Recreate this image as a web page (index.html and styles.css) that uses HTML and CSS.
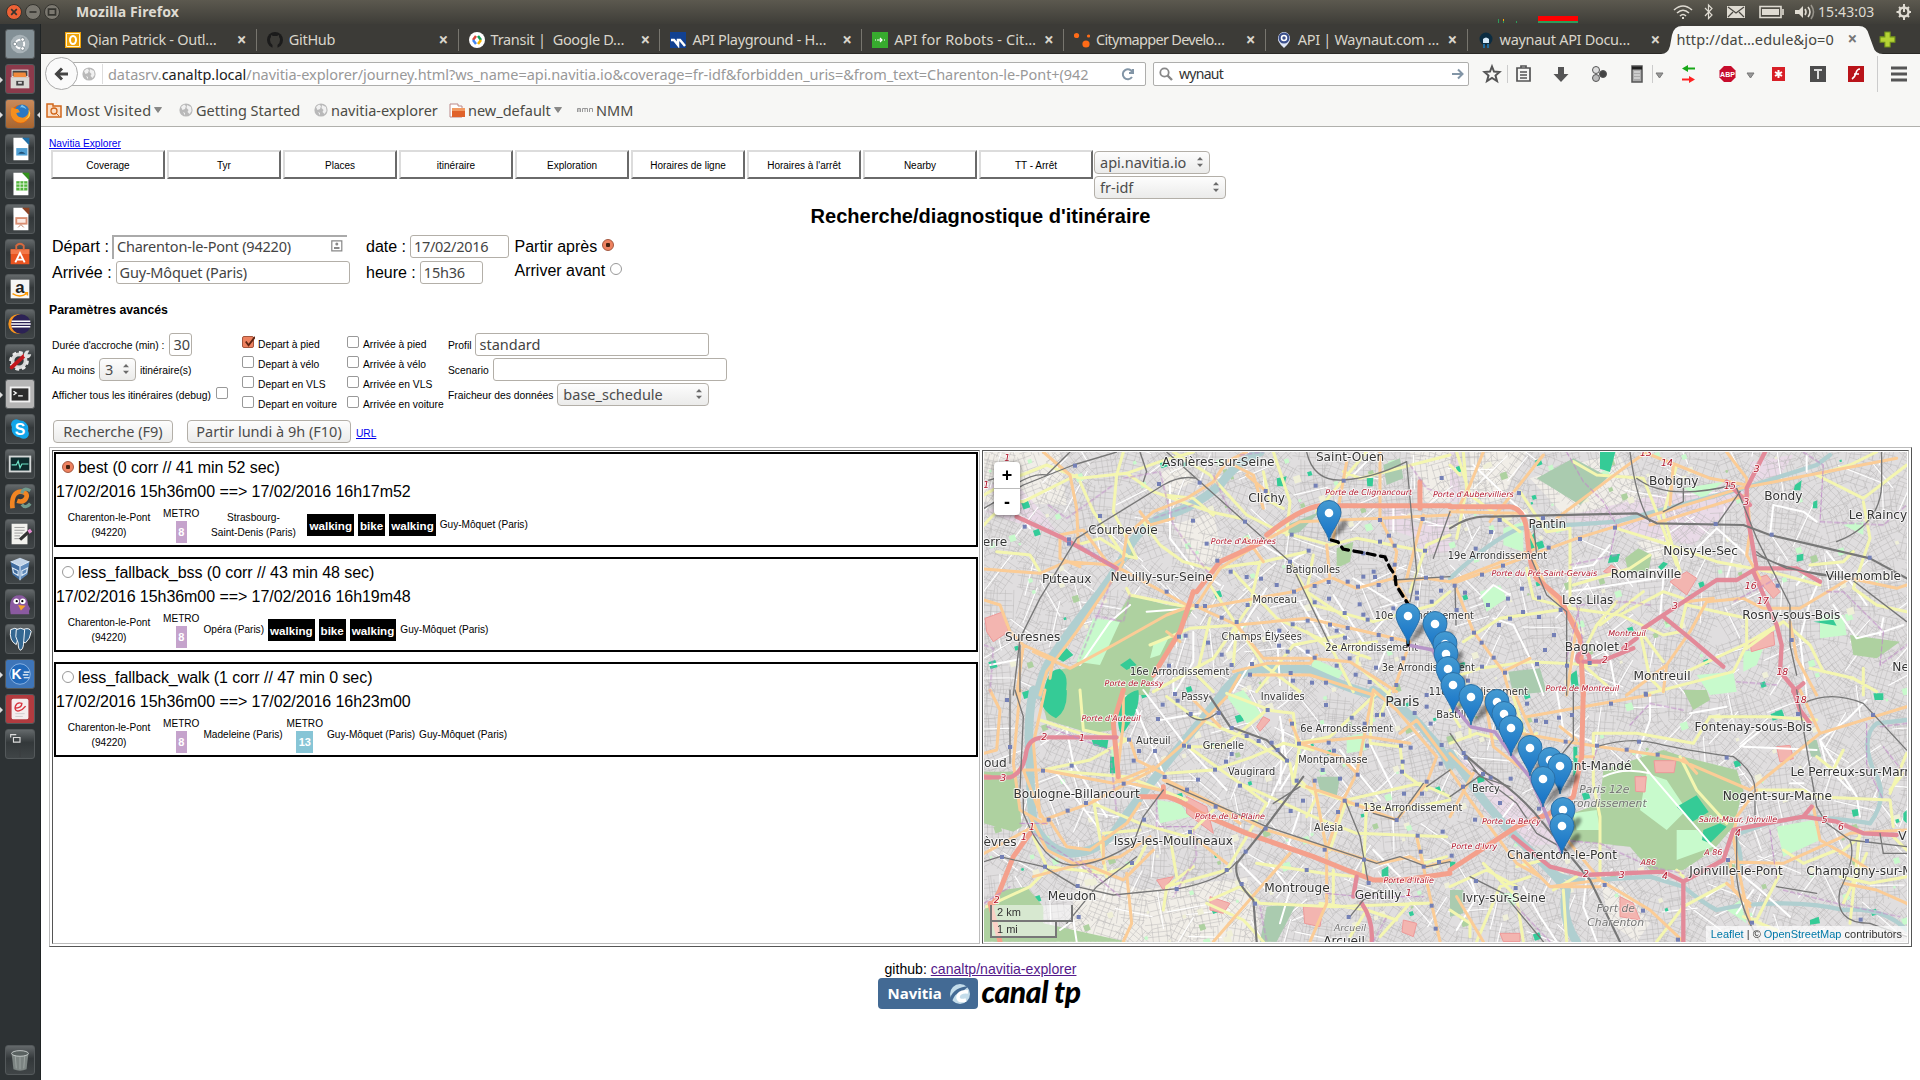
FILE: index.html
```html
<!DOCTYPE html>
<html lang="fr">
<head>
<meta charset="utf-8">
<title>Navitia Explorer</title>
<link rel="stylesheet" href="styles.css">
</head>
<body>
<svg width="0" height="0" class="defs">
  <defs>
    <linearGradient id="pinFill" x1="0" y1="0" x2="0" y2="1"><stop offset="0" stop-color="#459bd2"/><stop offset="1" stop-color="#126fc6"/></linearGradient>
    <symbol id="globe" viewBox="0 0 14 14"><circle cx="7" cy="7" r="6.6" fill="#b9b9b9"/><path d="M2 4 5 1.5 7 3 6 6 3.5 7zM8 2l4 2 .5 4-2 3-2-2 1-2-2-2zM4 9l2 1 0 2.500z" fill="#f1f1f1"/></symbol>
    <symbol id="spin" viewBox="0 0 8 12"><path d="M4 1 7 4.300H1zM4 11 7 7.700H1z" fill="#6b6b6b"/></symbol>
    <symbol id="caret" viewBox="0 0 8 6"><path d="M.5.500h7L4 5.500z" fill="#8a8a88" stroke="#666" stroke-width=".6"/></symbol>
    <symbol id="pin" viewBox="0 0 42 42" overflow="visible"><path d="M13 41 21 26Q28 17 31 22 32 29 13 41z" fill="#000" opacity=".4" class="shadow"/><path d="M12.500 41C11.500 33 .5 21 .5 12.500a12 12 0 0 1 24 0C24.500 21 13.500 33 12.500 41z" fill="url(#pinFill)" stroke="#2a6fa5" stroke-width="1"/><circle cx="12.500" cy="13" r="4.300" fill="#fff"/></symbol>
  </defs>
</svg>

<header class="panel">
  <span class="win close"><svg viewBox="0 0 10 10"><path d="M3 3l4 4M7 3l-4 4"/></svg></span>
  <span class="win"><svg viewBox="0 0 10 10"><path d="M2.500 5h5"/></svg></span>
  <span class="win"><svg viewBox="0 0 10 10"><path d="M2.500 3h5v4h-5z"/></svg></span>
  <b class="apptitle">Mozilla Firefox</b>
  <svg class="load" viewBox="0 0 84 8"><path d="M0 4h1v4H0zM5 4h1v4H5zM18 6h1v2h-1zM40 5h40v3H40z" fill="#2e9b5b"/><path d="M40 1h40v5H40z" fill="#f00"/><path d="M5 4h1v2H5z" fill="#fa0"/></svg>
  <svg class="tray" viewBox="0 0 240 24" fill="none" stroke="#dfdbd2" stroke-width="1.600">
    <path d="M3 10q9-8 18 0M6 13q6-5.500 12 0M9 16q3-3 6 0"/><path d="M12 17v2" stroke-width="2"/>
    <path d="M34 8l7 7-3.500 3.500V5L41 8.500 34 16" stroke-width="1.200"/>
    <path d="M56 6h18v12H56z" fill="#dfdbd2" stroke="none"/><path d="M57 7l8 6 8-6M57 17l5-5M73 17l-5-5" stroke="#4a4842" stroke-width="1.200"/>
    <path d="M89 6.500h21v11H89zM112 9v6"/><path d="M91 9h17v6H91z" fill="#dfdbd2" stroke="none"/>
    <path d="M124 10h4l4-4v12l-4-4h-4z" fill="#dfdbd2" stroke="none"/><path d="M134 9q2 3 0 6M137 7q4 5 0 10"/><path d="M140 5q5 7 0 14" opacity=".5"/>
    <circle cx="233" cy="12" r="4.500" stroke-width="2.400"/><path d="M233 4v8M225.500 12h3M237.500 12h3M228 17l1.500-1.500M238 17l-1.500-1.500M228 7l1.500 1.500M238 7l-1.500 1.500M233 20v-3" stroke-width="2"/>
  </svg>
  <span class="clock">15:43:03</span>
</header>

<div class="desktop">
<nav class="launcher">
  <i class="tile dash"><svg viewBox="0 0 30 30"><circle cx="15" cy="15" r="10" fill="#b9c2c6" opacity=".7"/><circle cx="15" cy="15" r="4.500" fill="none" stroke="#fff" stroke-width="2"/><g fill="#fff" stroke="#7d898f"><circle cx="9.500" cy="15" r="2"/><circle cx="17.800" cy="10.200" r="2"/><circle cx="17.800" cy="19.800" r="2"/></g></svg></i>
  <i class="tile wine run"><svg viewBox="0 0 30 30"><path d="M6 5h18v8H6z" fill="#f3f3f3"/><path d="M7 6h16v6H7z" fill="#444"/><path d="M8 8h13l1 5H8z" fill="#f08a3c"/><path d="M5 13h20v12H5z" fill="#d9d9d4"/><path d="M11 17h8v5h-8z" fill="#444"/><path d="M13 18h4v2h-4z" fill="#ddd"/></svg></i>
  <i class="tile fox run active"><svg viewBox="0 0 30 30"><circle cx="15.500" cy="15" r="10" fill="#e66000"/><circle cx="17" cy="12.500" r="7.800" fill="#2a78c2"/><path d="M17 5q4 2 5 5-4-3-7-2z" fill="#7cc5f0"/><path d="M6 8q-3 9 3 14 7 5 13 0 5-5 3-12-1 8-7 9-6 0-7-5l4-1-2-3-4-1z" fill="#f58f1e"/><path d="M24 10q2 8-4 11 6-1 6-7z" fill="#ffd24a"/></svg></i>
  <i class="tile"><svg viewBox="0 0 30 30"><path d="M8 3h10l6 7v17H8z" fill="#fff"/><path d="M17 3h8v8z" fill="#1f6fa8"/><path d="M11 14h12v8H11z" fill="#4f9fd3"/><path d="M13 20q3-4 8 0z" fill="#1f4f75"/></svg></i>
  <i class="tile"><svg viewBox="0 0 30 30"><path d="M8 3h10l6 7v17H8z" fill="#fff"/><path d="M17 3h8v8z" fill="#33921c"/><path d="M11 12h12v10H11z" fill="#51b53b"/><path d="M11 15h12M11 18.500h12M15 12v10M19 12v10" stroke="#e5f5df"/></svg></i>
  <i class="tile"><svg viewBox="0 0 30 30"><path d="M8 3h10l6 7v17H8z" fill="#fff"/><path d="M17 3h8v8z" fill="#8d4324"/><path d="M10 13h13v8H10z" fill="#d98e72"/><path d="M12 15h9v4h-9z" fill="#fbeae3"/><path d="M13 24l3-3 3 3" stroke="#b87358" fill="none"/></svg></i>
  <i class="tile"><svg viewBox="0 0 30 30"><path d="M5 10h20v5H5zM5 15h20v11H5z" fill="#e95420"/><path d="M5 10h20v5H5z" fill="#f37849"/><path d="M11 11V6q4-4 8 0v5" fill="none" stroke="#d6693e" stroke-width="2"/><path d="M10 24l5-10 5 10M11.500 21h7" stroke="#fff" stroke-width="2" fill="none"/></svg></i>
  <i class="tile"><svg viewBox="0 0 30 30"><path d="M5 5h20v20H5z" fill="#f6f6f6"/><text x="15" y="19" text-anchor="middle" class="amz">a</text><path d="M7 20q8 5 15 0M20 19h3v3" stroke="#f90" stroke-width="1.500" fill="none"/></svg></i>
  <i class="tile"><svg viewBox="0 0 30 30"><circle cx="13" cy="15" r="10.500" fill="#f7941e"/><circle cx="16" cy="15" r="10.500" fill="#2c2255"/><path d="M6 12h20M5.500 15h21M6 18h20" stroke="#fff" stroke-width="1.500"/></svg></i>
  <i class="tile"><svg viewBox="0 0 30 30"><circle cx="14" cy="17" r="7" fill="none" stroke="#d7d7d7" stroke-width="4"/><circle cx="14" cy="17" r="9" fill="none" stroke="#e8e8e8" stroke-width="3" stroke-dasharray="4 3"/><path d="M6 24 20 11" stroke="#c4161c" stroke-width="4" stroke-linecap="round"/><path d="M19 12q0-7 6-6l-2 4 4 0q-1 5-6 4z" fill="#e0e0e0"/></svg></i>
  <i class="tile light run"><svg viewBox="0 0 30 30"><path d="M4 7h22v17H4z" fill="#f1f1f1"/><path d="M6 9h18v13H6z" fill="#2c2c2c"/><path d="M8 12l3 2-3 2M13 17h5" stroke="#fff" stroke-width="1.400" fill="none"/></svg></i>
  <i class="tile"><svg viewBox="0 0 30 30"><circle cx="15" cy="15" r="9" fill="#12a5e9"/><circle cx="11" cy="10" r="5.500" fill="#12a5e9"/><circle cx="19" cy="20" r="5.500" fill="#12a5e9"/><text x="15" y="21" text-anchor="middle" class="sky">S</text></svg></i>
  <i class="tile"><svg viewBox="0 0 30 30"><path d="M3 6h24v18H3z" fill="#d5d8d8"/><path d="M5 8h20v14H5z" fill="#0d2a2c"/><path d="M6 16h5l2-4 2 7 2-4h7" stroke="#6fe3c8" stroke-width="1.300" fill="none"/></svg></i>
  <i class="tile"><svg viewBox="0 0 30 30"><path d="M7 25q-2-17 9-18 9 2 5 8-3 4-9 2" stroke="#f28522" stroke-width="5" fill="none"/><path d="M26 6q-8-4-9 3M17 21q4 5 9-1" stroke="#719b8d" stroke-width="3.500" fill="none"/></svg></i>
  <i class="tile"><svg viewBox="0 0 30 30"><path d="M6 4h17v22H6z" fill="#f2f2ee"/><path d="M9 8h11M9 11h11M9 14h9M9 17h6M9 20h5" stroke="#999"/><path d="M15 21 25 12" stroke="#333" stroke-width="3.500"/><path d="M24 13l3-2" stroke="#e48bd0" stroke-width="4"/></svg></i>
  <i class="tile"><svg viewBox="0 0 30 30"><path d="M15 3 25 7 15 12 5 7z" fill="#c4d5e8"/><path d="M5 7l10 5v15L7 21z" fill="#3f6ca0"/><path d="M25 7l-10 5v15l8-6z" fill="#5f8abb"/><path d="M5 7l10 5 10-5M15 12v15M7 14l6 3v5l-5-3zM23 14l-6 3v5l5-3z" stroke="#dce9f6" fill="none" stroke-width="1.200"/></svg></i>
  <i class="tile"><svg viewBox="0 0 30 30"><path d="M5 26Q2 9 11 6q9-2 12 6 0 5 3 8-2 2-1 6z" fill="#8a5aa0"/><circle cx="11" cy="12" r="3" fill="#fff"/><circle cx="18" cy="12" r="3" fill="#fff"/><circle cx="11.500" cy="12" r="1.200"/><circle cx="17.500" cy="12" r="1.200"/><path d="M13 16l8 1-5 5z" fill="#f5a52c"/></svg></i>
  <i class="tile"><svg viewBox="0 0 30 30" stroke="#fff" fill="#336791"><path d="M5 5q5-3 8 0 2 7-2 16-8-4-6-16z"/><path d="M18 5q7-3 9 2-1 8-6 12l-4-1z"/><path d="M11 5q5-3 9 0l-1 12q0 8-3 10-3 0-3-8-4-6-2-14z"/></svg></i>
  <i class="tile blue run"><svg viewBox="0 0 30 30"><circle cx="15" cy="15" r="11" fill="#2269ba" stroke="#8bb4e4"/><text x="6" y="20" class="kk">K</text><path d="M19 13h6M18 16h6M19 19h6" stroke="#fff" stroke-width="1.300"/></svg></i>
  <i class="tile crim run"><svg viewBox="0 0 30 30"><rect x="6" y="4" width="18" height="22" rx="2" fill="#f4eeee"/><path d="M9 14q8 0 8-5-5-2-7 3-1 6 4 5 4-1 7-5" stroke="#d8333d" stroke-width="1.500" fill="none"/><path d="M10 20h10M10 23h8" stroke="#ccc"/></svg></i>
  <i class="tile ws"><svg viewBox="0 0 30 30"><path d="M5 8V5h6M8 8h7v5H8z" stroke="#ddd" fill="none" stroke-width="1.200"/><path d="M15 16v13" stroke="#3a3d3f"/></svg></i>
  <i class="tile trash"><svg viewBox="0 0 30 30"><path d="M6 8l2 17q7 3 14 0l2-17z" fill="#7c8482"/><path d="M10 11l1 13M15 12v13M20 11l-1 13" stroke="#9da5a3"/><ellipse cx="15" cy="8" rx="9" ry="3" fill="#596160" stroke="#c9cfce"/></svg></i>
</nav>

<div class="browser">
  <div class="tabs">
    <div class="tab"><svg viewBox="0 0 16 16"><rect width="16" height="16" fill="#f0a30a"/><path d="M1.500 1.500h13v13h-13z" fill="none" stroke="#fff3cf" /><ellipse cx="8" cy="8" rx="3" ry="4" fill="none" stroke="#fff" stroke-width="2"/></svg><span>Qian Patrick - Outl…</span><b>×</b></div>
    <div class="tab"><svg viewBox="0 0 16 16"><circle cx="8" cy="8" r="8" fill="#1b1b1b"/><path d="M5.500 16v-3Q3 11 3 8q0-2 1-3l0-2 2 1h4l2-1v2q1 1 1 3 0 3-2.500 5v3z" fill="#3c3b37"/></svg><span>GitHub</span><b>×</b></div>
    <div class="tab"><svg viewBox="0 0 16 16"><circle cx="8" cy="8" r="8" fill="#fff"/><path d="M7 4 4 8" stroke="#db4437" stroke-width="2.500"/><path d="M4 8l3 4" stroke="#4285f4" stroke-width="2.500"/><path d="M9 4l3 4" stroke="#0f9d58" stroke-width="2.500"/><path d="M12 8l-3 4" stroke="#f4b400" stroke-width="2.500"/></svg><span>Transit&nbsp;| &nbsp;Google D…</span><b>×</b></div>
    <div class="tab"><svg viewBox="0 0 16 16"><path d="M0 0h16v16H0z" fill="#124191"/><path d="M1 8h3l4 5V8h2l5 6" stroke="#fff" stroke-width="2.500" fill="none"/></svg><span>API Playground - H…</span><b>×</b></div>
    <div class="tab loose"><svg viewBox="0 0 16 16"><path d="M0 0h16v16H0z" fill="#37ab2e"/><path d="M3 8h1M5 8h5M8 6l2 2-2 2M12 8h1" stroke="#fff" stroke-width="1.200" fill="none"/></svg><span>API for Robots - Cit…</span><b>×</b></div>
    <div class="tab tight"><svg viewBox="0 0 16 16" fill="#ff6b17"><circle cx="2.500" cy="3.500" r="2.600"/><circle cx="12" cy="12" r="3.600"/><circle cx="14.500" cy="4" r="1.600"/></svg><span>Citymapper Develo…</span><b>×</b></div>
    <div class="tab"><svg viewBox="0 0 16 16"><path d="M8 16Q1 10 2 5q2-5 6-5t6 5q1 5-6 11z" fill="#dfe6f5"/><circle cx="8" cy="6" r="5.500" fill="#3b4f8c"/><circle cx="8" cy="6" r="2.500" fill="none" stroke="#fff" stroke-width="1.500"/></svg><span>API | Waynaut.com …</span><b>×</b></div>
    <div class="tab last"><svg viewBox="0 0 16 16"><circle cx="8" cy="7" r="6.500" fill="#0b2c41"/><path d="M5 7q3-3 6 0v4H5z" fill="#d3e8f7"/><path d="M5 12h2v4H5zM9 12h2v4H9z" fill="#1d6ca0"/></svg><span>waynaut API Docu…</span><b>×</b></div>
    <div class="current"><svg class="tabshape" viewBox="0 0 222 30" preserveAspectRatio="none"><path d="M0 30Q7 30 9 22L11 11Q13 2 21 2H198Q206 2 208 11L212 22Q214 30 222 30z" fill="#f7f7f5"/></svg><span>http://dat…edule&amp;jo=0</span><b>×</b></div>
    <svg class="plus" viewBox="0 0 16 16"><path d="M5.500 1h5v4.500H15v5h-4.500V15h-5v-4.500H1v-5h4.500z" fill="#b5d334" stroke="#6f8f1c"/></svg>
  </div>
  <div class="navbar">
    <span class="back"><svg viewBox="0 0 16 16"><path d="M14 8H3M8 2.500 2.500 8 8 13.500" fill="none" stroke="#444" stroke-width="3"/></svg></span>
    <div class="url"><svg class="gl"><use href="#globe"/></svg><span class="addr">datasrv.<em>canaltp.local</em>/navitia-explorer/journey.html?ws_name=api.navitia.io&amp;coverage=fr-idf&amp;forbidden_uris=&amp;from_text=Charenton-le-Pont+(942</span><svg class="reload" viewBox="0 0 14 14"><path d="M12 2v4H8M11.500 5.500A5 5 0 1 0 11 10" fill="none" stroke="#8295a6" stroke-width="2"/></svg></div>
    <div class="search"><svg viewBox="0 0 14 14"><circle cx="5.500" cy="5.500" r="4.200" fill="none" stroke="#888" stroke-width="1.800"/><path d="M8.500 8.500 13 13" stroke="#888" stroke-width="2.400"/></svg><span>wynaut</span><svg viewBox="0 0 14 14"><path d="M1 7h10M7 2.500 11.500 7 7 11.500" fill="none" stroke="#8295a6" stroke-width="2"/></svg></div>
    <svg class="tools" viewBox="0 0 434 40" fill="none" stroke="#555" stroke-width="2">
      <path d="M16 12.500l2 5 5.500.5-4 3.500 1.500 5.500-5-3-5 3 1.500-5.500-4-3.500 5.500-.5z"/>
      <path d="M31.500 11v18M176.500 11v18M401.500 2v36" stroke="#ccc" stroke-width="1"/>
      <path d="M41 14h13v13H41zM45 12h5v2h-5zM44 18h7M44 21h7M44 24h7" stroke-width="1.700"/>
      <path d="M82 13h6v7h4.500L85 28l-7.500-8H82z" fill="#555" stroke="none"/>
      <g stroke="#555" stroke-width="1"><circle cx="120" cy="16" r="3.500" fill="#ddd"/><circle cx="127" cy="20" r="3.500" fill="#444"/><circle cx="120" cy="24" r="3.500" fill="#bbb"/></g>
      <path d="M156 12h10v16h-10z" fill="#aaa" stroke-width="1.500"/><path d="M158 18h6M158 21h6M158 24h6" stroke="#eee" stroke-width="1"/><path d="M156 14h10" stroke="#222" stroke-width="3"/>
      <path d="M180 19h7l-3.500 5zM271 19h7l-3.500 5z" fill="#999" stroke="#777" stroke-width="1"/>
      <path d="M219 14.500h-8" stroke="#18a818"/><path d="M206 14.500l6-3.500v7z" fill="#18a818" stroke="none"/><path d="M206 25.500h8" stroke="#f22"/><path d="M219 25.500l-6-3.500v7z" fill="#f22" stroke="none"/>
      <path d="M248 12h7l4.500 4.500v7L255 28h-7l-4.500-4.500v-7z" fill="#c70d2c" stroke="none"/>
      <path d="M296 13h13v14h-13z" fill="#d81f26" stroke="none"/><path d="M302.500 16v8M299 18l7 4M306 18l-7 4" stroke="#fff"/>
      <path d="M334 12h16v16h-16z" fill="#4d4d4d" stroke="none"/><path d="M338 16h8M342 16v9" stroke="#ddd"/>
      <path d="M372 12h16v16h-16z" fill="#b91319" stroke="none"/><path d="M384 15q-3 0-4 4t-4 6M378 20h5" stroke="#fff" stroke-width="1.600"/>
      <path d="M415 14h16M415 20h16M415 26h16" stroke-width="3"/>
      <text x="251.500" y="23" text-anchor="middle" class="abp">ABP</text>
    </svg>
  </div>
  <div class="bookmarks">
    <svg class="i16" viewBox="0 0 16 16"><path d="M1 2h6v2h8v11H1z" fill="#fbe0c8" stroke="#d1671b" stroke-width="1.500"/><circle cx="8" cy="9" r="3" fill="none" stroke="#d1671b" stroke-width="1.300"/><path d="M10 11l3 3" stroke="#d1671b"/></svg><span class="w89">Most Visited</span><svg class="car"><use href="#caret"/></svg>
    <svg class="i14 ml"><use href="#globe"/></svg><span class="w118">Getting Started</span>
    <svg class="i14"><use href="#globe"/></svg><span class="w118">navitia-explorer</span>
    <svg class="i16" viewBox="0 0 16 16"><path d="M1 2h8v2h4v11H1z" fill="#fff" stroke="#b88"/><path d="M3 6h13v9H3z" fill="#e0622a"/><path d="M3 6h13v3H3z" fill="#f19a63"/></svg><span class="w86">new_default</span><svg class="car"><use href="#caret"/></svg>
    <svg class="i16 nmm" viewBox="0 0 16 16"><path d="M.5 10V6.500h3V10M5.500 10V6.500h5V10M8 6.500V10M12.500 10V6.500h3V10M2 6.500V10" fill="none" stroke="#999"/></svg><span>NMM</span>
  </div>

  <main class="page">
    <a class="home" href="#">Navitia Explorer</a>
    <div class="menu">
      <span>Coverage</span><span>Tyr</span><span>Places</span><span>itinéraire</span><span>Exploration</span><span>Horaires de ligne</span><span>Horaires à l'arrêt</span><span>Nearby</span><span>TT - Arrêt</span>
      <div class="selects">
        <div class="select s116">api.navitia.io<svg><use href="#spin"/></svg></div>
        <div class="select s132">fr-idf<svg><use href="#spin"/></svg></div>
      </div>
    </div>
    <h1>Recherche/diagnostique d'itinéraire</h1>
    <div class="search-form">
      <div class="col c1">
        <div class="field">Départ :<div class="input sunk">Charenton-le-Pont (94220)<svg viewBox="0 0 12 12"><path d="M.8.800h10v10h-10z" fill="none" stroke="#888" stroke-width="1.200"/><circle cx="5.800" cy="4" r="1.500" fill="#888"/><path d="M3 9V7h5.500v2z" fill="#888"/></svg></div></div>
        <div class="field">Arrivée :<div class="input w234">Guy-Môquet (Paris)</div></div>
      </div>
      <div class="col c2">
        <div class="field">date :<div class="input w99">17/02/2016</div></div>
        <div class="field">heure :<div class="input w63">15h36</div></div>
      </div>
      <div class="col c3">
        <div class="field">Partir après<i class="radio on"></i></div>
        <div class="field">Arriver avant<i class="radio"></i></div>
      </div>
    </div>
    <h2>Paramètres avancés</h2>
    <div class="advanced">
      <div class="col a1">
        <div class="field"><label>Durée d'accroche (min) :</label><div class="input w23">30</div></div>
        <div class="field"><label>Au moins</label><div class="select s37">3<svg><use href="#spin"/></svg></div><label>itinéraire(s)</label></div>
        <div class="field"><label>Afficher tous les itinéraires (debug)</label><i class="check up"></i></div>
      </div>
      <div class="checks k1">
        <div><i class="check on"><svg viewBox="0 0 13 13"><path d="M3 6l3 4 7-9" fill="none" stroke="#5c2412" stroke-width="2"/></svg></i>Depart à pied</div><div><i class="check"></i>Depart à vélo</div><div><i class="check"></i>Depart en VLS</div><div><i class="check"></i>Depart en voiture</div>
      </div>
      <div class="checks k2">
        <div><i class="check"></i>Arrivée à pied</div><div><i class="check"></i>Arrivée à vélo</div><div><i class="check"></i>Arrivée en VLS</div><div><i class="check"></i>Arrivée en voiture</div>
      </div>
      <div class="col">
        <div class="field"><label>Profil</label><div class="input w234">standard</div></div>
        <div class="field"><label>Scenario</label><div class="input w234"></div></div>
        <div class="field"><label>Fraicheur des données</label><div class="select s152">base_schedule<svg><use href="#spin"/></svg></div></div>
      </div>
    </div>
    <div class="actions"><span class="btn b1">Recherche (F9)</span><span class="btn b2">Partir lundi à 9h (F10)</span><a href="#">URL</a></div>

    <section class="result">
      <div class="cell list">
        <article>
          <p class="name"><i class="radio on"></i>best (0 corr // 41 min 52 sec)</p>
          <p>17/02/2016 15h36m00 ==&gt; 17/02/2016 16h17m52</p>
          <div class="steps"><span class="stop">Charenton-le-Pont (94220)</span><span class="line">METRO<b class="m8">8</b></span><span class="stop">Strasbourg-<br>Saint-Denis (Paris)</span><b class="mode">walking</b><b class="mode">bike</b><b class="mode">walking</b><span>Guy-Môquet (Paris)</span></div>
        </article>
        <article>
          <p class="name"><i class="radio"></i>less_fallback_bss (0 corr // 43 min 48 sec)</p>
          <p>17/02/2016 15h36m00 ==&gt; 17/02/2016 16h19m48</p>
          <div class="steps"><span class="stop">Charenton-le-Pont (94220)</span><span class="line">METRO<b class="m8">8</b></span><span>Opéra (Paris)</span><b class="mode">walking</b><b class="mode">bike</b><b class="mode">walking</b><span>Guy-Môquet (Paris)</span></div>
        </article>
        <article>
          <p class="name"><i class="radio"></i>less_fallback_walk (1 corr // 47 min 0 sec)</p>
          <p>17/02/2016 15h36m00 ==&gt; 17/02/2016 16h23m00</p>
          <div class="steps"><span class="stop">Charenton-le-Pont (94220)</span><span class="line">METRO<b class="m8">8</b></span><span>Madeleine (Paris)</span><span class="line">METRO<b class="m13">13</b></span><span>Guy-Môquet (Paris)</span><span>Guy-Môquet (Paris)</span></div>
        </article>
      </div>
      <div class="cell map">
        <svg class="carto" viewBox="984 452 923 490">
          <rect x="984" y="452" width="923" height="490" fill="#e0dedf"/>
          <g class="beige">
            <path class="nw" d="M12 21H240L260 180 12 170zM580 240 700 200 730 350 640 360zM1290 21 1410 21V170H1320zM540 80 620 60 640 110 560 150z"/>
            <path class="ne" d="M240 100 500 21 600 180 350 220zM60 21h170l-80 150H60zM560 290l80-20 30 50-60 30z"/>
            <path class="sw" d="M300 520 480 600 740 570 850 755H260zM740 570 800 560 840 700 830 755z"/>
            <path class="se" d="M450 570 520 590 600 700 560 755 480 700z"/>
          </g>
          <g class="indus">
            <path class="nw" d="M1200 180h90l20 100-90-30zM12 200 150 160 240 270 100 230zM20 120l80-20 60 80-90 10zM1300 250l110-40v110l-80 10z"/>
            <path class="ne" d="M340 215 620 150 900 130 730 300 520 260zM0 21h30v150H0zM900 50l130-20-40 60-90 20z"/>
            <path class="se" d="M0 200 80 220 180 300 290 400 330 460 220 470 100 360z"/>
          </g>
          <g id="streets"></g>
          <g class="wood">
            <path class="nw" d="M450 450 560 480 640 490 600 560 520 700 505 750H190L210 680 280 665 400 535zM1070 310l50-20-10 60-40 20z"/>
            <path class="ne" d="M525 340l40-30 40 20-10 50h-60zM1200 570l150 20-70 50-70-10z"/>
            <path class="sw" d="M180 0H440L400 120 330 130 200 90zM12 245h98l15 165-25 15-88-25zM70 600l70-10 50 60v50l250 55H12v-95z"/>
            <path class="se" d="M460 240 640 180 700 200 860 240 880 300 850 410 790 480 700 540 600 540 540 470 360 450 370 370 450 340zM700 0h70l10 30-50 30z"/>
          </g>
          <g class="cemetery">
            <path class="nw" d="M1210 60l50-20 10 60-50 20zM920 240l100-40-60 60-40 10z"/>
            <path class="ne" d="M260 100 370 40 475 95 390 180zM175 680l95-10 20 70-100 10z"/>
            <path class="sw" d="M1010 260l70 0-10 60-50-20zM860 650l90-10-60 115h-50z"/>
            <path class="se" d="M0 600l40 0 0 70-40 10zM1070 150h30l14 50h-30z"/>
          </g>
          <g class="park">
            <path class="nw" d="M340 520l80 10-60 130-70-10zM1000 640l90 40-20 30-80-30zM520 600l50-30-30 60-30 10z"/>
            <path class="ne" d="M160 250l60-20v90l-60-20zM90 440l60-20 20 40-60 40zM700 130l120-20-60 50zM1180 240l60-10 0 40zM1110 510l70 0 10 60-80 10zM880 620l60-10-20 50-40 20zM740 690l110-10 10 60-80 10z"/>
            <path class="sw" d="M740 20l50-20 60 80-50 20zM530 330l70 10 30 40-90 20zM1100 140l50-10 10 50-60 10zM390 180l20-10 0 80-20 10z"/>
            <path class="se" d="M590 250l60 20 60 90-60 60-80-60zM680 420l60 0 50 50-110 40zM980 410l110-20 20 60-110 50zM370 370l70-10 10 60-70 0zM830 660l40-30 20 70zM150 610l60 0-20 40z"/>
          </g>
          <g class="sport">
            <path class="nw" d="M190 750Q200 670 240 672 270 690 255 750zM230 640l30-30 20 20-30 20zM420 660l30-20 20 20-30 15zM890 100l30-6-8 30-20 0zM1160 100l20-2-2 26-16 0z"/>
            <path class="ne" d="M450 21h46l-16 60-30-10zM240 280l14-20 4 50-20 10zM480 330l30-4-6 24-30 4zM1035 120l20-14-4 30-20 0zM640 350l14 6-20 20-10-10zM1090 530l60-6 10 18zM1040 330l20-4 0 20-20 4zM360 690l20-14 6 50-20 6zM1090 170l12-4 0 24-14 0z"/>
            <path class="sw" d="M180 0h80q4 60-32 85Q175 60 180 0zM415 70q10-60 60-70 10 60-50 135-14-20-10-65zM390 200l12 0 4 50-16 0zM335 150l50 0-4 26-40-10zM1205 540l20-12 0 30-20 2zM690 650l20-6 10 20-20 8z"/>
            <path class="se" d="M680 350l60-34 36 50-50 30zM760 420l50-20 20 10-50 50-24-10zM1270 10h30v20h-26zM80 260l20-6 4 20-20 6zM1080 690l26-10 4 20-30 4zM370 170l12 0 0 70-12 20zM1205 360l24-4 0 20-20 4zM1360 370l10-10v40l-10-10zM0 515h16v20H0z"/>
          </g>
          <g class="military">
            <path class="nw" d="M15 520 70 500 85 560 40 590 20 560z"/><path class="ne" d="M660 410l50-30 30 20-30 50zM460 380l24-20 20 14-20 14zM900 590l70-30 4 40-70 20zM920 400l30-10 40 50-20 20z"/>
            <path class="sw" d="M690 620l60 20-20 30-40-10zM970 650l60 0-10 60-46-10zM1270 690l40 10-10 40-34-14zM530 570l50-10-30 40zM850 80l20 10-30 34-10-14zM620 320l60 30 20 80-80-60z"/>
            <path class="se" d="M612 212l66 0-6 36-56 0zM555 260l34 0-4 46-28-2zM980 170l40-4 10 40-40 10zM510 620l40 20 20 50-60-10zM150 730l60 0 0 25h-50z"/>
          </g>
          <g class="water">
            <path class="nw" d="M840 21Q760 60 720 120 640 190 560 210 480 240 440 320 390 410 330 480 260 570 220 630 180 690 175 750M735 735Q780 680 820 672L980 672Q1100 730 1180 750"/>
            <path class="ne thin" d="M0 400Q130 280 210 250L500 230 880 130 1100 60 1140 30"/>
            <path class="sw" d="M160 0Q140 100 150 200 150 320 160 400 200 480 270 490 350 490 400 430 470 330 520 270 590 180 640 120 700 50 735 0M1180 0Q1300 70 1340 130 1390 180 1410 230"/>
            <path class="se" d="M0 190Q50 260 100 330 180 430 260 500 330 570 350 600 330 680 380 755"/>
            <path class="se thin" d="M260 510Q340 580 430 570L600 560 700 590Q760 640 800 660 880 640 1000 640 1100 640 1180 660 1300 650 1370 720M870 560Q880 480 850 440 950 390 1080 380 1200 390 1260 400 1320 320 1270 240 1230 140 1280 100L1370 90"/>
          </g>
          <g class="whiteroad">
            <path class="nw" d="M570 120V280L640 370M130 640 30 660M300 660 390 530 450 480M690 400 720 420M820 640 760 740M900 720 890 560 1000 640M1000 480 1060 600M960 470 1050 620M850 300 930 350 980 320M1060 450 1170 620M580 700V750M1120 400 1250 480 1180 560M1190 20 1120 90M640 560V650L580 750M860 430 740 620M1240 180V260M330 330 290 300M60 130 150 250M1240 560 1190 680M500 500 640 490"/>
            <path class="ne" d="M70 60 250 230M130 520 190 540 240 640 280 750M640 400 630 520M800 250 880 320 920 370M800 250 720 330M960 270 970 180 1060 200 1100 230M1070 30V80M350 440 490 420 620 400M440 590 480 640 500 750M1150 480 1220 580 1300 560 1360 540M370 370 430 360 480 300M1130 320 1180 380 1250 480M90 460 130 420 180 450M1300 520 1290 570M830 400 860 300M1080 370 1040 420M1110 400 1080 470 1050 580 1070 750"/>
            <path class="sw" d="M260 120 280 220 380 380M230 250 360 420M620 170 740 300M900 80 920 220 860 350M910 120 900 280M550 250 470 60M1080 180 1200 330M1170 160 1240 300M240 720 280 690 290 755M870 520 930 600 900 700M1000 140 900 300M780 520 860 600M660 70 540 90M1180 480 1260 560M490 0 620 170M960 360 920 480"/>
            <path class="se" d="M600 250 780 460 850 520M460 260Q520 230 600 250M600 250 560 200 600 90 600 20M720 70 830 50M880 170 1100 180M870 550 920 590 1020 680M1110 150 1130 230 1200 300M1110 150 1220 320 1230 380M320 0 340 120 440 160M410 560 400 650 440 755M220 590 270 680 320 755M830 580 770 620 800 600M20 720 80 620 60 560M1020 280 1060 280M160 380 190 340M910 600 860 670M1110 150 1190 90 1250 30M960 100 870 170"/>
          </g>
          <g class="yellow">
            <path class="nw" d="M12 150 100 100 200 60 300 100 440 85 520 140 690 200 780 220M440 85 540 50 640 21M12 240Q80 160 130 170L290 90M300 110 340 200 430 330 470 340 400 200 410 90 430 21M290 300 360 280 440 330M490 230 540 300 610 350 700 375M550 150 640 160 700 210M580 20 690 90 800 210 900 260 1050 300 1130 280 1340 320M1160 20 1010 200M880 20 930 170 920 270M910 190 870 170 850 80M710 370 850 350 980 320M840 350 810 480 770 540 690 420M760 380 890 520 1060 600 1170 640M440 430 450 450 640 490M930 350 1000 480 1180 530 1360 480 1410 440M1090 80 1140 100 1410 30M770 540 700 640 520 740M770 540 630 550 510 600M770 540 850 660 960 740M770 540 760 660M1090 570 940 600 830 740M1140 590 1130 660 1230 750M690 520 650 690 700 740M1190 590 1040 610M50 320 150 330 180 380M1410 270 1340 300 1290 440M980 560 1060 620 1120 740M1000 330 980 440 1100 520"/>
            <path class="ne" d="M20 21 60 150 210 260M40 21 50 130 20 280M210 140 290 260 360 250 360 480M0 60 30 90M370 50 440 90 580 100 620 200 680 360M680 60 640 210 690 380M500 250 660 300 800 350 960 380 1110 420M1100 90 1240 160 1370 60M1240 170 1260 280 1210 430 1280 480 1370 500M360 490 510 510 640 570M510 510 640 440 700 460 710 480 890 520 890 600 850 680 580 750M40 590 150 520 360 490 M410 600 440 540 500 470M360 490 250 460 230 370M440 660 240 650 90 670 0 700M400 660 480 730M580 440 450 540M640 570 690 560 710 470M710 680 880 600 1000 530 1080 600 1120 680M580 570 640 650 M1080 670 1210 700 1280 740M570 560 600 700 640 740M1280 21 1200 60 1100 90M1210 320 1180 350 1080 360M370 420 540 370 600 330M890 610 1000 530M1240 670 1240 750"/>
            <path class="sw" d="M300 0 310 120 450 150M180 90 300 130M190 240 330 210 440 150M190 240 440 260 620 330M340 330 380 560M340 340 480 400 620 440 700 360M610 160 780 280 1000 380 1130 430 1400 440M620 170 730 170 860 60 940 70 950 160 1050 140 1190 10M700 240 820 200 910 160 1000 180M700 240 560 250M560 20 640 80 810 150 930 220 940 280 1090 330M960 270 1010 320 980 380M960 160 940 280M780 280 860 340 740 540M830 520 1030 550 1130 560M1020 640 1160 660 1250 690M1090 340 1260 360 1410 330M1100 330 1320 280 1410 320M1100 330 1050 480M1180 0 1170 160 1260 170 1270 250 1340 300M1010 320 1040 480M200 540 150 590 20 650M160 440 200 530 380 550 470 520 500 460M550 660 560 590 740 540M560 590 640 530M570 440 590 560M370 430 480 420M690 630 780 590 840 640 1060 650 1340 640M1160 660 1110 740M1310 440 1330 520 1400 500M850 755 790 690 680 640M1200 740 1290 640 1350 640M870 60 740 10M1060 540 1060 640M1160 340 1150 550M1230 0 1200 80"/>
            <path class="se" d="M0 160 80 130 200 160M0 60 30 110M190 20 230 150 260 130M430 130 560 130 730 160 780 80 960 80 1100 90M430 130 430 280 450 380 450 560M690 200 740 300 830 400M920 300 1060 300 1090 320 1320 330 1330 410M1320 310 1370 190M1170 490 1230 440M1230 420 1200 700M1160 480 1060 520 1000 480M990 550 920 690 880 680M830 580 700 650 620 755M880 680 980 720M0 590 110 540 200 590M100 520 200 620 220 755M240 560 150 590 80 755M340 600 350 755M280 510 200 530M1330 440 1370 480M310 600 380 560M0 30 60 60 60 140M0 660 60 700 60 740M700 560 680 540M1100 200 1150 240 1180 180M1170 560 1260 580 1370 560M1250 490 1180 640M1360 250 1320 300M350 200 340 260"/>
          </g>
          <g class="orange">
            <path class="nw" d="M190 21 270 90 290 190 295 300M12 372 180 385 260 350 400 360 430 340 440 270 520 200 620 160 700 110 740 50 800 21M240 270 240 340 300 365M240 270 310 255 380 350 410 365 620 480M800 90 860 140M760 60 820 90 850 190M180 750 200 680 290 560 400 400 430 350M210 700 220 640 130 600 90 560 60 480 12 465M130 600 110 750M160 620 270 670 400 600 560 510 640 480 770 540 850 640 1000 640M650 480 720 370 830 300 960 230 1200 220 1410 210M1200 21 1200 220 1250 320 1240 400 1290 480M1060 400 1130 430 1240 400M660 490 940 440 1050 400 1040 300M770 540 980 520 1290 590M820 690 990 690 1180 750M760 680 860 655 990 655 1010 630M990 640 1110 650 1250 740M1100 50 1080 160 1060 280M1280 400 1330 210M1290 590 1240 740M480 200 510 240 580 220M750 740 780 690M850 350 800 280M560 560 600 590M1410 410 1340 400 1250 410"/>
            <path class="ne" d="M0 200 210 205 260 310 0 410M240 320 290 430 340 490M15 420 70 560 160 680 180 750M100 21 60 120 20 200M280 30 120 230M10 415 380 280 870 130 1340 40M590 21 520 70 320 220M590 25 680 60 780 100 890 120M670 60 660 180M830 21 890 100 900 260 890 330 930 400M600 240 890 150M340 480 380 540 350 750M650 660 720 560 770 470 880 460 940 490 1050 490 1200 400 1340 430 1370 420M160 680 240 640 M1020 530 1040 640 1100 750M710 470 790 460M530 750 650 660 640 740"/>
            <path class="sw" d="M120 0 100 220 120 360 190 400M30 0 60 60 50 180 12 190M195 0 160 160 180 380M130 240 190 240 400 280 520 230M190 390 330 340 440 280 520 240 600 170 740 20M200 400 180 370 130 240M205 385 260 470 330 480 440 400 480 340M150 380 200 480 280 520 420 500 510 440M430 0 430 100 410 270 540 300M450 150 470 210 550 250M550 270 620 310 710 350 780 400M930 90 960 160 1080 200 1130 250 1090 330 1040 480 1040 640 990 755M960 160 1160 140 1290 160M560 270 860 420 1200 520 1290 500 1340 530 1410 510M1090 330 1250 390 1340 280 1370 200 1250 60 1180 0M1000 270 1040 480M440 550 455 700 430 755M12 490 160 410M160 560 310 520 430 570 450 550 520 480 M370 440 370 520M1130 250 1180 0M930 490 700 755M640 440 740 520M720 110 640 30M980 290 1100 330M1380 755 1310 440M1260 130 1310 90 1400 210"/>
            <path class="se" d="M100 0 130 170 260 270M190 0 250 140M0 190 60 250M160 120 350 155 620 195 690 210 900 300 1110 130 1370 50M700 205 740 250M380 200 430 200M230 80 600 15M1050 0 1110 130M920 300 860 380 850 440 870 560 900 700M1090 350 1110 450 1180 490 1260 540M840 515 1000 520 1200 430 1370 420M450 570 300 590 200 490M450 570 600 660 700 755M450 570 360 460 300 380M0 240 60 330 200 520 270 560M20 620 100 755M300 590 450 590M0 380 70 250M830 580 900 640M1180 580 1280 600 1370 640M840 515 850 600 900 650M330 110 380 150"/>
          </g>
          <g class="peri">
            <path class="nw" d="M860 270Q960 190 1020 182L1410 182M1320 110V190M850 290 720 350 650 440M640 440 600 560 520 690"/>
            <path class="ne" d="M0 185 180 185Q220 190 230 250 240 380 260 400L330 460 390 580 400 750"/>
            <path class="sw" d="M430 0 400 100 415 260M480 320 560 320Q600 330 660 370L800 430 1000 500 1100 540 1180 570 1270 570 1410 550M12 260 30 262M150 430 100 500 60 600 40 640M60 755 30 640M550 290 550 320"/>
            <path class="se" d="M400 0 395 200 370 320 300 370 200 410 0 540"/>
          </g>
          <g class="motor">
            <path class="nw" d="M110 215 250 280 410 370"/>
            <path class="ne" d="M945 21 890 130 890 200 920 370 860 405 800 405 640 510 580 550M640 515 720 580 820 665M920 370 1040 370 1110 410M910 380 980 540 995 600 990 680 1040 740M400 650 450 650 550 610M830 110 900 180M385 650a18 18 0 1 1 30 0M560 580 520 610M1030 740 1060 715"/>
            <path class="sw" d="M12 262 90 262Q130 250 140 180 150 140 200 142L410 142M1145 640Q1180 690 1175 755M1130 560 1120 620"/>
            <path class="se" d="M190 440 300 530 400 555 640 545 700 575 820 510 850 420 950 400 1060 380 1160 395 1240 430 1340 435M700 575V755M1030 0 1050 60 1080 100M1060 380 1085 350"/>
          </g>
          <g class="rail">
            <path class="nw" d="M12 190 130 120 280 60 410 21M60 150Q150 80 200 90L270 21M560 21 660 110 850 280 930 350 1050 600M12 110 80 90M290 280 550 120Q600 90 650 100M290 280 180 460 120 580 100 750M980 21Q1000 110 1090 105T1280 50M1280 50 1310 380M1240 405 1410 395M1360 340 1410 200M1310 380 1290 470M120 600V740M480 21 500 80 490 110"/>
            <path class="ne thick" d="M0 250Q60 210 120 215L560 205 620 235 880 240 960 270 1260 340 1370 400"/>
            <path class="ne" d="M540 21Q560 170 600 230M560 100Q650 170 850 120M250 230 260 330M235 320 290 450 350 500 350 750M860 130 920 280 1020 480 1020 600 1040 690M920 320Q960 360 1110 390L1200 400 1370 530M700 130 700 170 640 200M800 240 870 140M1295 21V120Q1290 240 1160 290M920 330 1010 370 1200 400M15 420 18 540"/>
            <path class="sw thick" d="M970 260 850 420 770 520Q760 570 820 630L830 755M690 20 750 110 860 150 920 210"/>
            <path class="sw" d="M130 300 130 370Q190 520 270 525T460 460L490 380 550 300M12 515 60 500 190 530 290 590 400 615 600 595Q730 570 770 515M560 280 860 410 1190 520 1260 500 1340 530 1410 515M90 0 90 220M105 0 130 80 120 300M1095 330 1140 440 1165 580M1110 680 1150 630 1200 600M470 500 350 590 260 700M620 70Q660 110 710 70M1410 240 1340 290M880 340 960 290M1180 370 1250 390 1330 280"/>
            <path class="se thick" d="M40 190 110 250Q200 300 280 400L420 570 510 755"/>
            <path class="se" d="M0 130 90 260 180 290M370 0 370 150 330 200M70 240 200 340 260 430 330 470M440 170Q540 140 620 160T850 200Q920 250 915 310V400M1040 0 1100 350 1130 400 1200 450 1370 470M1060 40Q1140 0 1240 40L1370 180M860 420 860 560Q870 660 930 755M1200 450Q1220 500 1170 600 1150 700 1260 700L1370 740M1290 430 1300 490 1370 490M0 320 100 250M60 560 160 610 280 755M980 590 1100 610"/>
          </g>
          <g class="border">
            <path class="nw" d="M430 100 540 80 580 240 690 390M205 180 260 220 400 120M12 600 40 610 30 740M450 450 430 530 340 510M700 90 750 200M780 30 850 21M300 300 410 370 300 640M1290 60 1340 130 1400 150M640 180 520 220"/>
            <path class="ne" d="M350 21 400 110 460 170 500 240 480 330M500 330 360 360M1060 21 1120 60 1110 230 1300 240 1370 180M980 400 850 470M600 480 530 470 390 480 350 640M1130 440 1180 440 1300 560 1290 660 1370 600M980 720 860 710M380 480 400 600"/>
            <path class="sw" d="M200 110 390 180 410 370M160 430 350 560 420 620M12 640 90 590M350 560 300 510M530 330 530 410 640 410 650 500 580 620M840 650 860 755M1040 610 1140 620 1330 620M1180 755 1220 680M120 400 200 400"/>
            <path class="se" d="M540 105 600 40 700 60M440 180 420 240M340 450 450 460 600 530 700 550M1250 100 1250 230 1300 330M960 420 980 570M1370 260 1300 170M900 530 870 560M1000 600 1160 640 1350 680M200 650 300 755M1370 100 1290 110"/>
          </g>
          <g id="stations"></g>
          <g class="town">
            <g class="nw"><text x="715" y="63">Asnières-sur-Seine</text><text x="1110" y="48">Saint-Ouen</text><text x="860" y="170">Clichy</text><text x="429" y="268">Courbevoie</text><text x="45" y="304">erre</text><text x="260" y="415">Puteaux</text><text x="545" y="408">Neuilly-sur-Seine</text><text x="158" y="589">Suresnes</text></g>
            <g class="ne"><text x="671" y="120">Bobigny</text><text x="1000" y="164">Bondy</text><text x="1284" y="221">Le Raincy</text><text x="292" y="250">Pantin</text><text x="752" y="330">Noisy-le-Sec</text><text x="588" y="400">Romainville</text><text x="1240" y="406">Villemomble</text><text x="413" y="476">Les Lilas</text><text x="1024" y="521">Rosny-sous-Bois</text><text x="426" y="618">Bagnolet</text><text x="636" y="704">Montreuil</text><text x="1352" y="679">Ne</text></g>
            <g class="sw"><text x="1267" y="48" class="capital">Paris</text><text x="46" y="231">oud</text><text x="290" y="324">Boulogne-Billancourt</text><text x="60" y="469">èvres</text><text x="580" y="465">Issy-les-Moulineaux</text><text x="276" y="629">Meudon</text><text x="951" y="606">Montrouge</text><text x="1194" y="628">Gentilly</text><text x="1092" y="766">Arcueil</text></g>
            <g class="se"><text x="430" y="241">Saint-Mandé</text><text x="910" y="122">Fontenay-sous-Bois</text><text x="1215" y="258">Le Perreux-sur-Marne</text><text x="982" y="329">Nogent-sur-Marne</text><text x="336" y="507">Charenton-le-Pont</text><text x="162" y="635">Ivry-sur-Seine</text><text x="858" y="554">Joinville-le-Pont</text><text x="1270" y="554">Champigny-sur-Marne</text><text x="1362" y="449">Vi</text></g>
          </g>
          <g class="district">
            <g class="nw"><text x="999" y="383">Batignolles</text><text x="884" y="473">Monceau</text><text x="1333" y="521">10e Arrondissement</text><text x="845" y="585">Champs Élysées</text><text x="1175" y="617">2e Arrondissement</text><text x="1345" y="677">3e Arrondissement</text><text x="599" y="691">16e Arrondissement</text><text x="1495" y="751">11e Arrondissement</text></g>
            <g class="ne"><text x="142" y="342">19e Arrondissement</text></g>
            <g class="sw"><text x="645" y="31">Passy</text><text x="908" y="30">Invalides</text><text x="1423" y="84">Bastille</text><text x="1100" y="125">6e Arrondissement</text><text x="520" y="162">Auteuil</text><text x="730" y="176">Grenelle</text><text x="1059" y="218">Montparnasse</text><text x="815" y="256">Vaugirard</text><text x="1298" y="364">13e Arrondissement</text><text x="1046" y="424">Alésia</text></g>
            <g class="se"><text x="108" y="307">Bercy</text></g>
          </g>
          <g class="gray"><g class="sw"><text x="1110" y="722">Arcueil</text></g><g class="se wide"><text x="463" y="308">Paris 12e</text><text x="461" y="351">Arrondissement</text><text x="497" y="667">Fort de</text><text x="497" y="707">Charenton</text></g></g>
          <g class="gate">
            <g class="nw"><text x="1166" y="150">Porte de Clignancourt</text><text x="790" y="298">Porte d'Asnières</text><text x="462" y="723">Porte de Passy</text><text x="1480" y="157">Porte d'Aubervilliers</text></g>
            <g class="ne"><text x="283" y="394">Porte du Pré-Saint-Gervais</text><text x="531" y="574">Montreuil</text><text x="397" y="737">Porte de Montreuil</text></g>
            <g class="sw"><text x="393" y="94">Porte d'Auteuil</text><text x="750" y="388">Porte de la Plaine</text><text x="1286" y="580">Porte d'Italie</text></g>
            <g class="se"><text x="184" y="401">Porte de Bercy</text><text x="73" y="477">Porte d'Ivry</text><text x="864" y="397">Saint-Maur, Joinville</text><text x="595" y="524">A86</text><text x="790" y="496">A 86</text></g>
          </g>
          <g class="exit">
            <g class="nw"><text x="82" y="48">1</text><text x="19" y="129">1</text></g>
            <g class="ne"><text x="588" y="32">13</text><text x="651" y="63">14</text><text x="840" y="132">15</text><text x="920" y="80">3</text><text x="889" y="179">3</text><text x="902" y="432">16</text><text x="939" y="477">17</text><text x="675" y="493">3</text><text x="529" y="614">1</text><text x="465" y="653">2</text><text x="997" y="689">18</text></g>
            <g class="sw"><text x="193" y="150">2</text><text x="306" y="153">1</text><text x="70" y="274">3</text><text x="156" y="421">1</text><text x="132" y="450">1</text><text x="50" y="640">2</text><text x="1286" y="619">1</text></g>
            <g class="se"><text x="1052" y="38">18</text><text x="1124" y="398">5</text><text x="1173" y="419">6</text><text x="864" y="437">4</text><text x="408" y="561">2</text><text x="515" y="564">3</text><text x="645" y="566">4</text></g>
          </g>
          <path d="M1408 645 1433 650 1446 680 1455 708 1471 727 1495 732 1512 756 1530 777 1543 807 1562 853" fill="none" stroke="#b795c8" stroke-width="3.500"/>
          <path d="M1331 540 1338 542 1343 549 1370 554 1385 557 1390 568 1395 575 1396 585 1408 604V645" fill="none" stroke="#000" stroke-width="3.300" stroke-dasharray="8 5.500" stroke-linecap="round"/>
          <g id="pins"></g>
        </svg>
        <div class="zoom"><b>+</b><b>-</b></div>
        <div class="scale"><span class="km">2 km</span><span class="mi">1 mi</span></div>
        <div class="credit"><a>Leaflet</a> | © <a>OpenStreetMap</a> contributors</div>
      </div>
    </section>
    <footer>
      <p>github: <a href="#">canaltp/navitia-explorer</a></p>
      <div class="logos"><span class="navitia">Navitia<svg viewBox="0 0 22 22"><circle cx="11" cy="11" r="10" fill="#c3dcea"/><path d="M1 15Q5 4 20 3L14 8Q6 10 3 18z" fill="#436a94"/><path d="M19 9q-9-1-10 5 0 5 8 3" fill="none" stroke="#fff" stroke-width="3.500"/></svg></span><span class="canal">canal tp</span></div>
    </footer>
  </main>
</div>
</div>
<script src="map.js"></script>
</body>
</html>
```
FILE: map.js
```js
const NS = 'http://www.w3.org/2000/svg';
const add = (parent, tag, attrs) => {
  const el = document.createElementNS(NS, tag);
  for (const k in attrs) el.setAttribute(k, attrs[k]);
  document.getElementById(parent).appendChild(el);
};

// repeatable pseudo random numbers, so the street grid is stable
let seed = 11;
const rnd = () => (seed = (seed * 16807) % 2147483647) / 2147483647;

// residential street grid
let d = '', w = '';
for (let x = 970; x < 1920; x += 26) {
  for (let y = 440; y < 955; y += 26) {
    const a = rnd() * Math.PI, c = Math.cos(a), s = Math.sin(a);
    const cx = x + rnd() * 10, cy = y + rnd() * 10;
    for (let i = -2; i <= 2; i++) {
      const o = i * (4 + rnd() * 3), l = 11 + rnd() * 6;
      const p = (u, v) => (cx + u * c - v * s).toFixed(1) + ' ' + (cy + u * s + v * c).toFixed(1);
      d += 'M' + p(-l, o) + 'L' + p(l, o);
      d += 'M' + p(o * 1.3, -l) + 'L' + p(o * 1.3, l);
      if (i === 0 && rnd() > .6) w += 'M' + p(-l * 1.4, o) + 'L' + p(l * 1.4, o + 3);
    }
  }
}
add('streets', 'path', { d, fill: 'none', stroke: '#bab9b9', 'stroke-width': .5 });
add('streets', 'path', { d: w, fill: 'none', stroke: '#fff', 'stroke-width': 1.1 });

// small squares, schools and gardens
const tints = ['#33cc99', '#f0f0d8', '#c8facc', '#f0f0d8', '#aed1a0', '#f0f0d8', '#c8facc'];
for (let i = 0; i < 420; i++) {
  const r = 2 + rnd() * 5, x = 984 + rnd() * 923, y = 452 + rnd() * 490;
  add('streets', 'path', { d: `M${x} ${y}l${r} ${-r / 3} ${r / 3} ${r} ${-r} ${r / 3}z`, fill: tints[i % 7] });
}

// metro and train stations
const tiles = [
  [980, 445, [285,62,659,113,537,117,857,138,795,230,639,227,360,213,134,245,267,283,267,296,680,296,712,347,752,380,560,440,650,483,675,483,800,396,843,401,890,420,942,440,1004,423,1046,411,1103,410,1134,425,1196,420,1150,395,1181,380,1185,396,803,480,1047,461,1004,472,1094,504,1139,478,1150,509,1163,524,983,527,938,538,1050,539,1103,549,1070,557,1095,578,1196,570,1235,582,898,557,897,602,923,620,983,620,725,518,770,531,684,593,617,572,597,575,725,629,567,662,755,660,816,657,810,689,932,684,939,707,996,713,1038,713,1004,638,1070,662,1109,640,1127,689,1169,711,1188,668,1270,640,1249,720,1007,122,1091,107,1385,99,1200,225,1328,222,1227,272,1200,290,1244,302,1335,317,1244,359,935,269,986,317,930,350,1311,443,1338,398,1385,398,1383,437,1311,460,1355,470,1240,490,1150,325,1340,750]],
  [1450, 445, [207,144,279,219,149,225,123,261,77,311,296,308,390,282,495,248,797,237,965,269,1259,338,159,362,96,389,14,422,45,443,216,431,267,458,332,495,174,461,114,480,20,495,219,501,180,521,267,516,147,540,72,563,312,570,95,593,285,615,131,638,261,657,351,662,419,654,96,665,165,683,54,707,983,422,1025,585,587,746]],
  [980, 690, [81,30,90,171,189,242,275,227,447,149,477,183,525,183,461,212,431,281,318,339,263,362,206,389,66,501,195,530,293,588,296,681,456,519,590,597,492,389,621,299,554,261,612,167,627,170,654,269,705,239,738,215,755,192,780,287,707,350,630,426,857,416,797,485,740,540,785,582,825,641,980,540,1034,479,1094,332,1131,344,1074,366,932,363,969,332,950,272,1004,272,1028,240,1080,266,1133,254,1161,167,1046,158,1062,182,957,161,936,101,893,180,921,212,836,153,800,138,755,114,716,69,632,72,593,32,585,12,548,44,534,87,863,60,875,158,1038,45,1115,83,1154,101,1191,75,1209,74,1304,69,1340,50,1352,101,1263,167,1292,173,1268,215,1266,245,1340,275,1385,165,1382,221,1272,311,1326,311,1313,437,1250,390,1322,485,1331,530,1377,516,1388,425,1152,509,1166,579,1106,681,1355,647,1367,716]],
  [1450, 690, [231,41,588,14,483,41,258,92,288,96,327,83,366,75,347,155,441,167,567,155,530,179,623,194,830,203,41,189,47,203,99,252,122,263,182,266,39,290,150,339,267,356,75,389,5,497,78,573,197,594,464,585,579,662,684,749,906,698,834,510,1251,453,1269,75,1044,72,1232,689]],
];
for (const [ox, oy, pts] of tiles)
  for (let i = 0; i < pts.length; i += 2)
    add('stations', 'rect', { x: ox + pts[i] / 3 - 2, y: oy + pts[i + 1] / 3 - 2, width: 4, height: 4, fill: '#7480b6' });

// stops of the selected journey, given by the centre of the marker head
const stops = [[1329,513],[1408,616],[1435,624],[1445,644],[1446,654],[1448,669],[1453,685],[1471,697],[1497,702],[1504,714],[1511,728],[1530,748],[1550,760],[1560,766],[1543,779],[1563,810],[1562,826]];
for (const [x, y] of stops)
  add('pins', 'use', { href: '#pin', x: x - 12.5, y: y - 13, width: 42, height: 42 });
```
FILE: styles.css
```css
* { box-sizing: border-box; }
body { margin: 0; width: 1920px; height: 1080px; overflow: hidden; background: #fff; font-family: "Liberation Sans", Arial, sans-serif; font-size: 16px; color: #000; }
.defs { position: absolute; }
p, h1, h2 { margin: 0; }
svg { display: block; flex: none; }
a { color: #00e; }
i { font-style: normal; }

.panel { height: 24px; display: flex; align-items: center; padding-left: 6px; background: linear-gradient(#5c594f, #3e3d38); color: #dfdbd2; font-family: "Noto Sans", sans-serif; }
.win { width: 16px; height: 16px; border-radius: 50%; margin-right: 3px; background: #7b7870; border: 1px solid #35342f; }
.win svg { width: 14px; height: 14px; fill: none; stroke: #35342f; stroke-width: 1.2; }
.win.close { background: #ee6236; }
.apptitle { margin-left: 13px; font-size: 14px; letter-spacing: .1px; width: 1422px; padding-bottom: 1px; }
.load { width: 84px; height: 8px; margin-top: 14px; }
.tray { width: 240px; height: 24px; margin-left: 89px; }
.clock { margin-left: -93px; font-size: 14px; letter-spacing: .1px; padding-bottom: 1px; }

.desktop { display: flex; height: 1056px; }
.launcher { width: 41px; background: #2d3234; border-right: 1px solid #202425; padding: 5px 5px 5px; display: flex; flex-direction: column; gap: 5px; }
.tile { width: 30px; height: 30px; border-radius: 3px; background: linear-gradient(#64696b, #33383a 45%, #404547); border: 1px solid #54595b; position: relative; }
.tile svg { width: 28px; height: 28px; }
.tile.dash { background: #839096; }
.tile.wine { background: #8c3a4b; }
.tile.fox { background: linear-gradient(#c98a5b, #a8652f); }
.tile.light { background: #b5b5b5; }
.tile.blue { background: #3e75b8; }
.tile.crim { background: #b23b3f; }
.tile.trash { margin-top: auto; }
.run::before, .active::after { content: ""; position: absolute; left: -6px; top: 12px; border: 3px solid transparent; border-left-color: #ddd; border-right: 0; }
.active::after { left: auto; right: -6px; border-left: 0; border-right: 3px solid #ddd; }
.amz { font: bold 18px "Liberation Sans", sans-serif; fill: #222; }
.sky { font: bold 17px "Liberation Sans", sans-serif; fill: #fff; }
.kk { font: bold 15px "Liberation Sans", sans-serif; fill: #fff; }

.browser { flex: 1; width: 1879px; }
.tabs, .navbar, .bookmarks, .input, .select, .btn { font-family: "Noto Sans", sans-serif; font-size: 14.5px; }
.tabs { height: 30px; display: flex; background: #3c3b37; border-bottom: 1px solid #2a2926; padding-left: 14px; color: #d9d5cb; }
.tab { width: 201.8px; height: 22px; margin-top: 5px; padding: 0 9px 0 10px; border-right: 1px solid #77756e; display: flex; align-items: center; }
.tab.last { border-right: 0; }
.tab svg { width: 16px; height: 16px; margin-right: 6px; }
.tab span { flex: 1; white-space: nowrap; letter-spacing: -.3px; padding-bottom: 2px; }
.tab.loose span { letter-spacing: .1px; }
.tab.tight span { letter-spacing: -.7px; }
.tabs b { font-size: 17px; line-height: 20px; width: 10px; padding-bottom: 1px; }
.current { width: 222px; margin-left: -8px; height: 30px; display: flex; align-items: center; padding: 0 18px 0 15px; color: #46463f; position: relative; }
.current span { flex: 1; position: relative; letter-spacing: .15px; white-space: nowrap; }
.current b { position: relative; color: #777; margin-right: 8px; }
.tabshape { position: absolute; left: 0; top: 0; width: 222px; height: 30px; }
.plus { width: 17px; height: 17px; margin: 7px 0 0 -4px; }

.navbar { height: 43px; background: #f7f7f5; display: flex; align-items: center; padding: 0 0 4px 4px; }
.back { width: 33px; height: 33px; border: 1px solid #aaa; border-radius: 50%; background: #fafafa; display: grid; place-items: center; z-index: 1; }
.back svg { width: 16px; height: 16px; }
.url, .search { height: 24px; border: 1px solid #aeaeac; border-radius: 2px; background: #fff; display: flex; align-items: center; }
.url { width: 1076px; margin-left: -8px; padding-left: 11px; color: #999; }
.gl { width: 14px; height: 14px; margin-right: 6px; }
.addr { flex: 1; border-left: 1px solid #ddd; padding-left: 5px; white-space: nowrap; overflow: hidden; letter-spacing: -.05px; }
.addr em { font-style: normal; color: #222; }
.reload { width: 14px; height: 14px; margin: 0 10px 0 9px; }
.search { width: 316px; margin-left: 7px; padding: 0 3px 0 5px; color: #333; }
.search span { flex: 1; margin-left: 6px; font-size: 14px; letter-spacing: -.7px; }
.search svg { width: 14px; height: 14px; }
.tools { width: 434px; height: 40px; margin-left: 7px; }
.abp { font: bold 7px "Liberation Sans", sans-serif; fill: #fff; stroke: none; }
.bookmarks { height: 30px; background: #f7f7f5; border-bottom: 1px solid #b0b0ac; display: flex; align-items: center; padding: 0 0 3px 5px; color: #4c4c46; }
.bookmarks span { white-space: nowrap; letter-spacing: 0; padding-bottom: 1px; }
.i16 { width: 16px; height: 16px; margin-right: 3px; }
.i14 { width: 14px; height: 14px; margin-right: 3px; }
.car { width: 8px; height: 6px; }
.ml { margin-left: 17px; } .nmm { margin-left: 15px; }
.bookmarks .w89 { width: 89px; letter-spacing: .25px; } .w118 { width: 118px; } .w86 { width: 86px; }

.page { padding: 9px 8px 0 8px; }
.home { display: block; font-size: 10.2px; line-height: 16px; height: 14px; }
.menu { display: flex; gap: 2px; padding-left: 2px; height: 49px; font-size: 10px; }
.menu > span { width: 114px; height: 29px; border: 2px solid; border-color: #dcdcdc #6a6a6a #6a6a6a #dcdcdc; line-height: 27px; text-align: center; }
.selects { margin: 1px 0 0 -1px; display: flex; flex-direction: column; gap: 2px; }
.select, .btn { height: 23px; border: 1px solid #b3afa8; border-radius: 4px; background: linear-gradient(#fdfdfd, #ebebea); color: #4c4c4c; display: flex; align-items: center; justify-content: space-between; padding: 0 5px 1px; white-space: nowrap; }
.select svg { width: 8px; height: 12px; }
.s116 { width: 116px; } .s132 { width: 132px; } .s37 { width: 37px; } .s152 { width: 152px; }
h1 { font-size: 20.05px; line-height: 34px; text-align: center; }
.search-form, .advanced { display: flex; padding-left: 3px; }
.col { display: flex; flex-direction: column; gap: 2px; }
.field { display: flex; align-items: center; gap: 4px; height: 23px; white-space: nowrap; }
.search-form .col { gap: 3px; padding-top: 2px; }
.search-form .input { letter-spacing: -.2px; }
.search-form .w99 { letter-spacing: -.3px; }
.c1 { width: 314px; } .c2 { width: 148.5px; }
.search-form .c3 { padding-top: 2px; gap: 1px; }
.input { height: 23px; border: 1px solid #b3afa8; border-radius: 3px; padding: 0 3px 2px; display: flex; align-items: center; justify-content: space-between; color: #444; }
.search-form .sunk { width: 235px; height: 24px; border: 0; border-top: 2px solid #aaa; border-left: 2px solid #aaa; border-radius: 0; background: #fff; margin-left: -1px; padding: 0 3px 4px; }
.sunk svg { width: 12px; height: 12px; margin-right: 1px; }
.w234 { width: 234px; } .w99 { width: 99px; } .w63 { width: 63px; } .w23 { width: 23px; }
.radio { width: 12px; height: 12px; border: 1px solid #999; border-radius: 50%; background: #fff; margin: -3px 2px 0 1px; flex: none; }
.radio.on { background: radial-gradient(#45210f 0 2px, #ee8260 2.5px); border-color: #a4553c; }
h2 { font-size: 12.3px; line-height: 26px; margin: 13px 0 10px; }
.advanced { font-size: 10.3px; height: 77px; }
.advanced label { padding-top: 2px; }
.a1 { width: 190px; }
.a1 .input, .a1 .check { margin-left: 1px; }
.check { display: inline-block; width: 12px; height: 12px; border: 1px solid #999; border-radius: 2px; background: #fff; flex: none; }
.check.on { background: #ee8260; border-color: #a4553c; }
.check.on svg { width: 12px; height: 12px; margin-top: -1px; }
.check.up { margin-top: -4px; }
.checks { padding-top: 2px; }
.checks div { height: 20px; display: flex; gap: 4px; line-height: 20px; white-space: nowrap; }
.checks .check { margin-top: 1px; }
.k1 { width: 105px; } .k2 { width: 101px; }
.actions { display: flex; margin-top: 10px; padding-left: 4px; font-size: 10.2px; height: 27px; }
.btn { justify-content: center; }
.b1 { width: 120px; margin-right: 14px; } .b2 { width: 164px; margin-right: 5px; }
.actions a { line-height: 27px; }

.result { display: flex; gap: 2px; height: 500px; border: 1px solid; border-color: #bbb #555 #555 #bbb; padding: 2px; }
.cell { border: 1px solid; border-color: #555 #bbb #bbb #555; padding: 1px; height: 494px; }
.list { width: 928px; display: flex; flex-direction: column; gap: 10px; }
.map { width: 927px; position: relative; }
article { height: 95px; border: 2px solid #000; padding: 2px 1px 0 0; }
article p { line-height: 24px; white-space: nowrap; display: flex; align-items: center; letter-spacing: -.06px; }
.name .radio { margin: -3px 4px 0 6px; }
.steps { height: 41px; display: flex; align-items: center; gap: 4px; font-size: 10.1px; line-height: 15px; padding-left: 3px; white-space: nowrap; }
.stop { width: 100px; text-align: center; white-space: normal; }
.line { display: flex; flex-direction: column; align-items: center; }
.steps b { height: 22px; line-height: 23px; padding: 0 2px; color: #fff; font-size: 11.6px; }
.mode { background: #000; }
.steps .line b { font-size: 11px; padding: 0 2.5px; }
.m8 { background: #c5a3cc; } .m13 { background: #87c5d6; }

.carto { width: 923px; height: 490px; font-family: "DejaVu Sans", sans-serif; overflow: hidden; }
.nw { transform: translate(980px, 445px) scale(.33333); }
.ne { transform: translate(1450px, 445px) scale(.33333); }
.sw { transform: translate(980px, 690px) scale(.33333); }
.se { transform: translate(1450px, 690px) scale(.33333); }
.beige { fill: #f1eee8; } .indus { fill: #e9dae7; } .wood { fill: #aed1a0; } .cemetery { fill: #aacbaf; } .park { fill: #c8facc; } .sport { fill: #35cb96; } .military { fill: #f3b5b0; stroke: #e99; stroke-width: 3; }
.water, .whiteroad, .yellow, .orange, .peri, .motor, .rail, .border { fill: none; stroke-linejoin: round; stroke-linecap: round; }
.water { stroke: #b0cfd0; stroke-width: 26; } .water .thin { stroke-width: 13; }
.whiteroad { stroke: #fff; stroke-width: 6; }
.yellow { stroke: #f4f6b0; stroke-width: 9; }
.orange { stroke: #fbcc96; stroke-width: 9; }
.peri { stroke: #f4a08c; stroke-width: 15; }
.motor { stroke: #e38a99; stroke-width: 13; }
.rail { stroke: #777; stroke-width: 4; } .rail .thick { stroke-width: 6.5; }
.border { stroke: #c08cc8; stroke-width: 3.5; stroke-dasharray: 14 8; opacity: .8; }
.carto text { text-anchor: middle; paint-order: stroke; stroke: #fff; stroke-opacity: .75; stroke-width: 6px; stroke-linejoin: round; fill: #333; }
.town { font-size: 36.5px; } .capital { font-size: 43px; }
.district { font-size: 29.5px; }
.gray { font-size: 28px; font-style: italic; } .gray .wide { font-size: 32.5px; } .carto .gray text { fill: #777; stroke-opacity: .4; }
.gate { font-size: 24px; font-style: italic; } .exit { font-size: 28px; font-style: italic; }
.carto .gate text, .carto .exit text { fill: #b3192e; }
.shadow { filter: blur(1.5px); }
.zoom { position: absolute; left: 11px; top: 11px; width: 26px; height: 53px; border-radius: 4px; background: #fff; box-shadow: 0 1px 5px #0008; text-align: center; font: bold 18px/26px "Liberation Sans", sans-serif; }
.zoom b { display: block; height: 26px; }
.zoom b + b { border-top: 1px solid #bbb; height: 27px; }
.scale { position: absolute; left: 7px; top: 454px; font-size: 11px; line-height: 15px; color: #333; }
.scale span { display: block; border: 2px solid #777; border-top: 0; background: #ffffff80; padding-left: 5px; height: 17px; }
.km { width: 83px; } .scale .mi { width: 67px; border-bottom: 2px solid #777; height: 16px; }
.credit { position: absolute; right: 1px; bottom: 1px; height: 16px; padding: 0 5px; font-size: 11px; line-height: 16px; background: #ffffffb3; color: #333; white-space: nowrap; }
.credit a { color: #0078a8; }

footer { text-align: center; padding-top: 12px; font-size: 14.1px; }
footer p { line-height: 20px; }
footer p a { color: #551a8b; }
.logos { display: flex; justify-content: center; gap: 4px; margin-top: -1px; }
.navitia { width: 100px; height: 31px; border-radius: 4px; background: #436a94; color: #fff; font: bold 15px/31px "Noto Sans", sans-serif; display: flex; align-items: center; justify-content: space-between; padding: 0 7px 0 10px; }
.navitia svg { width: 22px; height: 22px; }
.canal { width: 102px; height: 31px; text-align: left; font: italic 900 30px/26px Lato, sans-serif; white-space: nowrap; letter-spacing: -.4px; }
```
